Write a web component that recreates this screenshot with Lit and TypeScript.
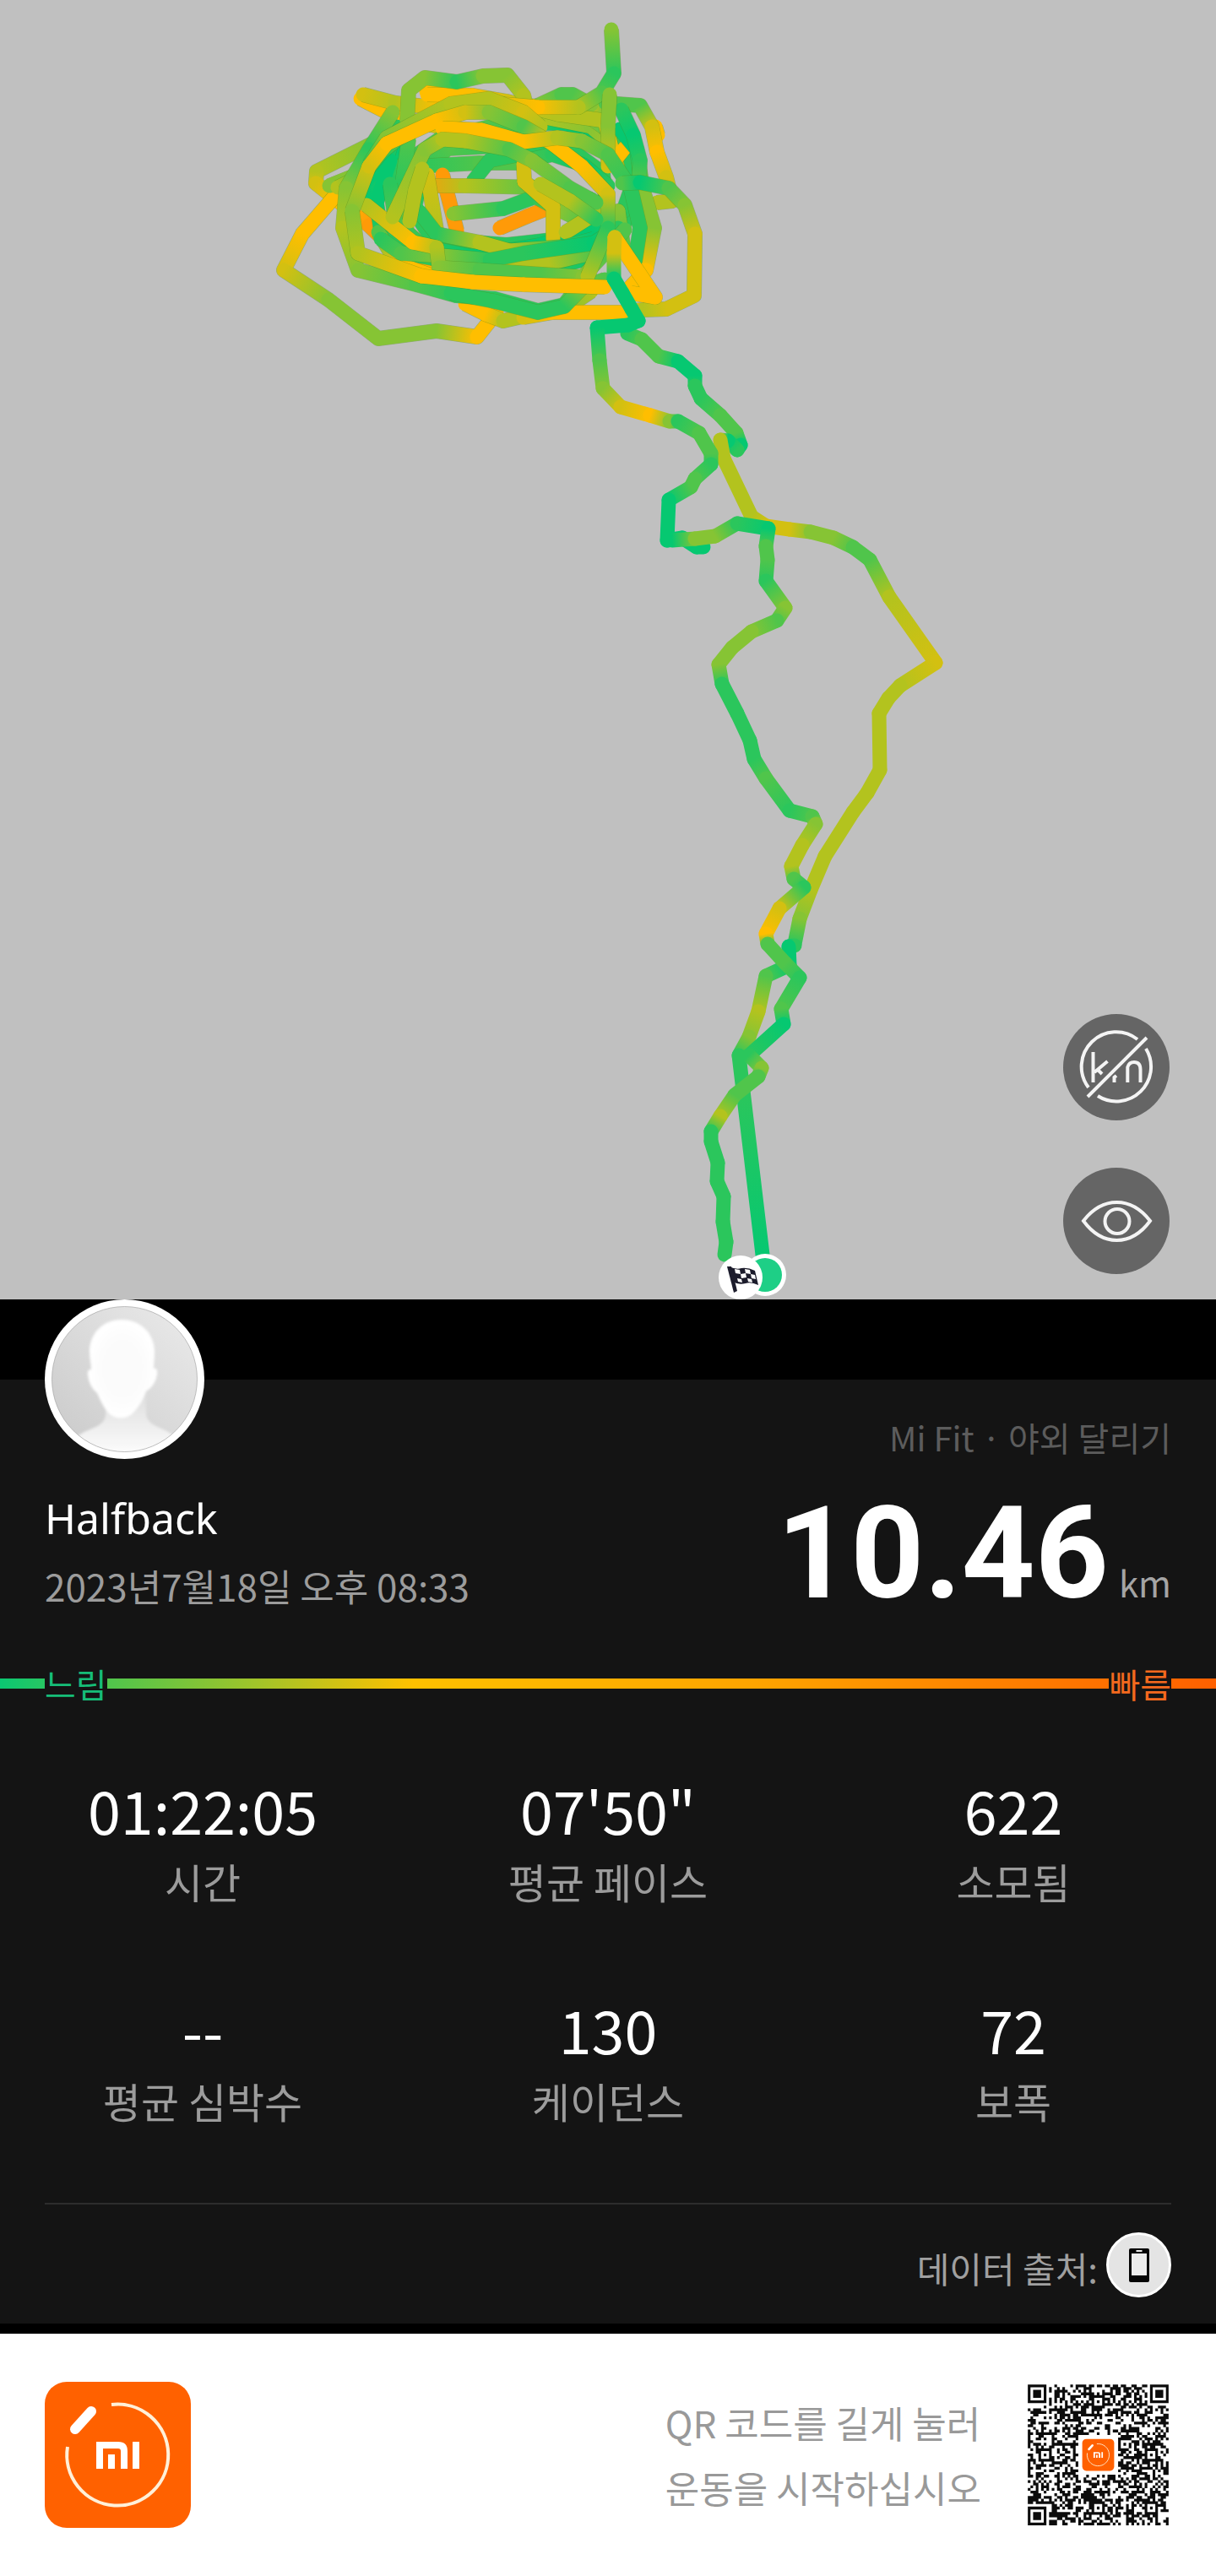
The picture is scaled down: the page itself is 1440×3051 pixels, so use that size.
import { LitElement, html, svg, css } from "lit";
import { customElement } from "lit/decorators.js";

type Point = [number, number, number];

/* Pace colours, from slow (0) to fast (7). */
const PACE = ["#06c871", "#2bc65c", "#50c54b", "#86c434", "#b3c31e", "#d3c011", "#ffbe00", "#ff9a08"];

const parse = (track: string): Point[] =>
  track.split(" ").map((p) => p.split(",").map(Number) as Point);

/* Laps round the field: x, y, pace step. Later ones lie on top. */
const LAPS = [
  "441,170,3 375,203,4 374,217,5 403,240,6 437,267,7 482,310,7 520,325,6",
  "396,233,6 358,277,6 336,320,5 389,355,3 448,401,3 517,392,3 565,399,6 588,370,6",
  "427,117,6 468,138,6 520,150,5 600,160,3 700,170,1 740,190,0",
  "430,112,5 468,122,4 520,128,6 600,126,6 689,125,6 713,126,3",
  "505,108,6 550,114,6 590,122,5",
  "776,150,6 779,160,6",
  "637,125,3 665,112,2 678,112,2 700,124,3",
  "390,220,3 420,208,3 452,200,1 470,180,0",
  "470,150,1 452,205,0 440,232,0 470,200,1 520,165,2 580,150,2 640,146,1 668,146,0 706,157,0 734,175,1 748,215,0 742,260,1 720,300,0 650,318,1 560,315,1 480,300,1 452,280,1 446,240,0 462,190,0",
  "484,165,2 476,220,1 482,275,3 510,300,2 590,306,1 680,296,0 720,262,1 714,205,1 680,180,1 610,172,1 530,176,2 500,205,1 490,250,1 512,283,1 600,290,1 690,280,0 704,250,2",
  "400,222,4 430,207,2 452,180,1 488,150,3 560,130,4 640,138,4 700,150,3 735,180,4 748,210,5 756,240,2",
  "462,218,1 468,262,2 500,292,1 560,304,0 640,290,0 700,272,0 738,250,1 752,210,1 742,170,1 700,140,3",
  "448,275,2 470,312,6 520,330,6 600,318,4 650,312,4 700,300,2",
  "506,112,6 560,113,6 600,120,5 660,135,4 716,143,4 728,190,6 740,175,6",
  "717,122,2 758,125,2 772,150,5 778,180,6 789,210,5 796,238,4 778,240,4",
  "734,153,0 754,177,0 761,223,3 775,270,3 765,320,6 742,345,6",
  "736,130,1 750,160,0 758,190,1 757,210,2",
  "496,197,1 568,193,2 613,193,2 654,183,1 690,195,0 720,220,1",
  "560,215,1 580,190,1 620,182,1",
  "524,207,7 541,273,7",
  "493,220,7 551,220,4 641,222,2 700,236,1",
  "506,207,5 517,273,4",
  "592,270,7 625,256,7 658,243,7",
  "537,253,3 596,247,1 634,233,1 665,250,3 690,262,2",
  "655,283,5 655,245,5 621,215,5 620,195,5",
  "670,275,4 700,256,4 732,250,3 738,290,2",
  "496,250,1 517,277,1 568,287,4 603,297,4 670,292,1 703,283,0",
  "451,283,1 475,300,2 524,303,3 580,308,1 620,300,1 703,288,0 732,270,1",
  "434,243,4 489,287,6 517,293,4 520,317,3 568,320,2 641,325,2 690,328,3 716,300,2 740,272,2",
  "551,360,6 575,372,6 596,380,4 640,370,4 675,362,3 700,345,4",
  "620,376,5 654,370,6 737,370,6 761,367,5",
  "465,133,3 437,177,1 410,223,3 406,270,4 424,320,3 493,337,2 540,350,1 586,354,1 637,368,1 668,361,1 682,343,3 716,331,2",
  "534,347,1 586,357,1 637,370,1 668,363,1 690,340,3",
  "482,143,3 484,107,3 503,92,3 541,97,1 572,90,3 601,89,3 620,113,4 630,150,4",
  "724,35,3 727,87,1 713,110,2 685,127,4 637,127,6 580,122,5",
  "722,112,3 720,150,3 720,197,5",
  "437,195,1 458,163,3 534,123,4 579,117,4 620,133,5 640,150,4",
  "417,250,3 437,197,5 458,170,6 517,143,6 551,133,5 579,133,3 620,150,2 654,170,6 689,197,6 720,230,5 720,270,1 696,327,4",
  "524,152,6 570,154,6 620,168,6 660,163,4 689,167,3 720,183,2 747,223,1 758,270,1 752,310,1",
  "465,257,4 503,177,3 524,165,4 551,167,4 603,177,2 630,190,3 675,223,2 706,240,2",
  "485,262,4 492,225,4 500,200,4",
  "640,218,4 675,238,4 706,260,1",
  "417,250,3 424,300,4 499,327,6 560,334,6 620,337,6 716,340,6",
  "737,217,2 758,216,0 792,223,2 811,243,3 823,277,5 822,350,5 789,366,5 761,367,4",
  "728,281,6 776,352,6 747,347,6",
];

/* The way out to the field and the way back. */
const ROUTES = [
  "743,395,1 760,402,2 780,422,2 803,428,0 823,445,0 823,457,1 830,472,1 853,492,2 872,513,2 877,527,0 873,533,1 862,522,0 853,521,4 857,543,4 890,612,4 907,623,5 935,627,5 960,630,3 987,637,3 1010,648,2 1030,663,2 1053,707,4 1108,785,5 1066,812,4 1052,827,4 1041,845,4 1042,912,4 1027,939,4 1010,962,4 977,1014,4 960,1054,4 947,1088,3 941,1118,1",
  "941,1120,1 934,1121,0 935,1143,0 907,1156,2 898,1198,4 887,1228,3 875,1250,1 880,1292,1 903,1486,0",
  "728,281,5 727,300,5 727,330,0 737,347,0 748,366,0 756,380,0 744,385,0 707,388,0 710,427,2 714,460,3 735,482,5 770,492,6 793,499,3 803,499,1 828,513,2 842,537,2 842,550,1 823,567,2 818,577,2 792,592,0 790,640,0 808,637,0 825,648,0 833,648,0",
  "796,640,0 823,638,3 847,635,3 873,620,1 910,626,0 907,647,2 909,663,2 907,688,1 930,720,3 920,735,2 890,748,3 867,767,3 851,787,3 855,810,1 873,845,1 888,877,1 893,899,1 907,922,2 935,960,1 962,967,2 966,976,3 950,1001,4 937,1026,4 940,1041,2 952,1051,1 923,1076,5 907,1106,6 909,1118,2 930,1141,2 947,1158,1 925,1195,2 928,1213,0 887,1250,1 902,1265,3 898,1275,2 870,1297,2 853,1322,4 842,1340,1 842,1352,1 850,1377,1 849,1399,1 857,1417,1 856,1447,1 860,1471,1 858,1486,1",
];

@customElement("route-map")
export class RouteMap extends LitElement {
  static styles = css`
    :host {
      display: block;
    }
    .map {
      display: block;
      width: 100%;
      height: auto;
      background: #c0c0c0;
    }
  `;

  private track(points: Point[], key: string, edge: boolean) {
    const outline = points.map((p) => `${p[0]},${p[1]}`).join(" ");
    return svg`
      ${edge
        ? svg`<polyline points=${outline} fill="none" stroke="#4d8a1c" stroke-opacity="0.45" stroke-width="18" stroke-linejoin="round" />`
        : ""}
      ${points.slice(1).map((b, i) => {
        const a = points[i];
        const id = `${key}-${i}`;
        return svg`
          <linearGradient id=${id} gradientUnits="userSpaceOnUse" x1=${a[0]} y1=${a[1]} x2=${b[0]} y2=${b[1]}>
            <stop offset="0" stop-color=${PACE[a[2]]} />
            <stop offset="1" stop-color=${PACE[b[2]]} />
          </linearGradient>
          <path d=${`M${a[0]} ${a[1]}L${b[0]} ${b[1]}`} stroke=${`url(#${id})`} stroke-width="17" stroke-linecap="round" />`;
      })}`;
  }

  render() {
    return html`
      <svg class="map" viewBox="0 0 1440 1539" role="img" aria-label="Route">
        ${LAPS.map((t, i) => this.track(parse(t), `lap${i}`, true))}
        ${ROUTES.map((t, i) => this.track(parse(t), `route${i}`, false))}
        <circle cx="906" cy="1510" r="25" fill="#fff" />
        <circle cx="906" cy="1510" r="20" fill="#1ecf86" />
        <circle cx="877" cy="1513" r="26" fill="#fff" />
        <path d="M861 1500l5 0l7 29l-4 2z" fill="#1c1c2c" />
        <path d="M863 1500q9 4 15 2q8-1 16 3l4 17q-9-4-15-2q-9 2-15-2z" fill="#1c1c2c" />
        <path
          d="M870 1503l6 1l1 5l-6-1zM882 1503l6 1l1 5l-6-1zM877 1509l6-1l1 5l-6 1zM889 1509l5 1l1 5l-5-1zM873 1514l5 1l1 4l-5-1zM885 1514l5 1l1 4l-5-1z"
          fill="#fff"
        />
      </svg>
    `;
  }
}

const mark = svg`
  <path d="M79 27A60 60 0 1 1 27 77" fill="none" stroke="#fff0d8" stroke-width="4" />
  <path d="M55 35L36 56" stroke="#fff" stroke-width="12" stroke-linecap="round" />
  <path d="M65 103V75H87Q94 75 94 82V103" fill="none" stroke="#fff" stroke-width="8" />
  <path d="M79 86V103M108 71V103" stroke="#fff" stroke-width="8" />
`;

@customElement("qr-code")
export class QrCode extends LitElement {
  static styles = css`
    :host {
      display: block;
    }
    .code {
      display: block;
      width: 100%;
      height: auto;
    }
  `;

  private modules(): string {
    const size = 53;
    let seed = 20230718;
    const random = () => {
      seed = (Math.imul(seed, 1664525) + 1013904223) >>> 0;
      return seed / 4294967296;
    };
    const grid = Array.from({ length: size }, () =>
      Array.from({ length: size }, () => random() < 0.5),
    );
    for (let i = 8; i < size - 8; i++) {
      grid[6][i] = i % 2 === 0;
      grid[i][6] = i % 2 === 0;
    }
    const square = (cx: number, cy: number, reach: number, dark: (d: number) => boolean) => {
      for (let y = cy - reach; y <= cy + reach; y++)
        for (let x = cx - reach; x <= cx + reach; x++)
          if (x >= 0 && y >= 0 && x < size && y < size)
            grid[y][x] = dark(Math.max(Math.abs(x - cx), Math.abs(y - cy)));
    };
    for (const [x, y] of [[3, 3], [49, 3], [3, 49]]) square(x, y, 4, (d) => d < 2 || d === 3);
    for (const [x, y] of [[26, 6], [6, 26], [46, 26], [26, 46], [46, 46]])
      square(x, y, 2, (d) => d !== 1);
    square(26, 26, 7, () => false);
    let path = "";
    grid.forEach((row, y) => {
      for (let x = 0; x < size; x++) {
        if (!row[x]) continue;
        let end = x;
        while (end < size && row[end]) end++;
        path += `M${x} ${y}H${end}V${y + 1.05}H${x}Z`;
        x = end;
      }
    });
    return path;
  }

  render() {
    return html`
      <svg class="code" viewBox="-1 -1 55 55" role="img" aria-label="QR">
        <path d=${this.modules()} fill="#0c0c0c" />
        <g transform="translate(20.500 20.500) scale(0.0694)">
          <rect width="173" height="173" rx="22" fill="#ff6100" />
          ${mark}
        </g>
      </svg>
    `;
  }
}

const STATS = [
  ["시간", "01:22:05"],
  ["평균 페이스", "07'50\""],
  ["소모됨", "622"],
  ["평균 심박수", "--"],
  ["케이던스", "130"],
  ["보폭", "72"],
];

@customElement("app-root")
export class AppRoot extends LitElement {
  static styles = css`
    :host {
      display: block;
      background: #fff;
      font-family: "Noto Sans CJK KR", "Noto Sans", sans-serif;
    }
    .stage {
      position: relative;
    }
    .tools {
      position: absolute;
      right: 55px;
      bottom: 30px;
      display: flex;
      flex-direction: column;
      gap: 56px;
    }
    .tool {
      width: 126px;
      height: 126px;
      padding: 0;
      border: 0;
      border-radius: 50%;
      background: #656565;
      cursor: pointer;
    }
    .tool svg {
      display: block;
      fill: none;
      stroke: #f4f4f4;
      stroke-width: 4;
    }
    .panel {
      background: linear-gradient(#000 0 95px, #141414 95px);
      border-bottom: 12px solid #000;
    }
    .summary {
      display: flex;
      justify-content: space-between;
      align-items: flex-end;
      padding: 0 53px;
    }
    .avatar {
      display: block;
      width: 189px;
      height: 189px;
      margin-bottom: 40px;
    }
    .name {
      margin: 0 0 20px;
      font: 400 50px/60px "Noto Sans", sans-serif;
      color: #fff;
    }
    .date {
      margin: 0;
      font-size: 44px;
      line-height: 60px;
      color: #9c9c9c;
    }
    .result {
      display: flex;
      flex-direction: column;
      align-items: flex-end;
      gap: 48px;
      padding-bottom: 4px;
    }
    .sport {
      margin: 0;
      font-size: 40px;
      line-height: 60px;
      color: #5c5c5c;
    }
    .distance {
      display: flex;
      align-items: baseline;
      gap: 12px;
      margin: 0;
      line-height: 120px;
    }
    .amount {
      font-family: "Roboto", sans-serif;
      font-weight: 700;
      font-size: 152px;
      color: #fff;
    }
    .unit {
      font-size: 42px;
      line-height: 60px;
      color: #a4a4a4;
    }
    .scale {
      display: flex;
      justify-content: space-between;
      align-items: center;
      margin-top: 56px;
      padding: 0 53px;
      background: linear-gradient(
          90deg,
          #0bc772,
          #50c54c 9%,
          #a0c42a 21%,
          #ffc000 34%,
          #ffa400 62%,
          #ff6000
        )
        center / 100% 12px no-repeat;
      font-size: 40px;
      line-height: 60px;
    }
    .slow,
    .fast {
      background: #141414;
    }
    .slow {
      color: #16bd78;
    }
    .fast {
      color: #f4691e;
    }
    .stats {
      display: grid;
      grid-template-columns: repeat(3, 1fr);
      row-gap: 100px;
      margin: 74px 0 0;
    }
    .stat {
      display: flex;
      flex-direction: column-reverse;
      align-items: center;
      gap: 10px;
    }
    .label {
      font-size: 49px;
      line-height: 60px;
      color: #9c9c9c;
    }
    .value {
      margin: 0;
      font-size: 70px;
      line-height: 90px;
      color: #fff;
    }
    .source {
      display: flex;
      justify-content: flex-end;
      align-items: flex-end;
      gap: 10px;
      margin: 91px 53px 0;
      padding: 33px 0 31px;
      border-top: 2px solid #2d2d2d;
      font-size: 42px;
      line-height: 70px;
      color: #a0a0a0;
    }
    .device {
      display: block;
      width: 77px;
      height: 77px;
    }
    .footer {
      display: flex;
      align-items: center;
      gap: 52px;
      padding: 57px 53px;
    }
    .logo {
      display: block;
      width: 173px;
      height: 173px;
    }
    .hint {
      margin: 0 0 0 auto;
      font-size: 44px;
      line-height: 77px;
      color: #999;
    }
    .qr {
      width: 173px;
    }
  `;

  render() {
    return html`
      <main>
        <section class="stage">
          <route-map></route-map>
          <div class="tools">
            <button class="tool" type="button" aria-label="km">
              <svg viewBox="0 0 126 126">
                <path d="M30 87A41 41 0 0 1 88 30M98 41A41 41 0 0 1 41 97M99 28L29 98" />
                <path d="M35.500 45V81M52.500 56L37 69M41 66L46 71M60.500 81V75L63 73" />
                <path d="M76.300 81V63Q78 57 84 57Q91.500 57 91.500 66V81" />
              </svg>
            </button>
            <button class="tool" type="button" aria-label="view">
              <svg viewBox="0 0 126 126">
                <path d="M24 63Q41 41 63.500 41Q86 41 103 63Q86 86 63.500 86Q41 86 24 63Z" />
                <circle cx="64" cy="63.500" r="14.500" />
              </svg>
            </button>
          </div>
        </section>

        <section class="panel">
          <header class="summary">
            <div>
              <svg class="avatar" viewBox="0 0 189 189" aria-hidden="true">
                <defs>
                  <linearGradient id="backdrop" x1="0" y1="1" x2="1" y2="0">
                    <stop offset="0" stop-color="#c9c9c9" />
                    <stop offset="1" stop-color="#ebebeb" />
                  </linearGradient>
                  <linearGradient id="body" x1="0" y1="0" x2="0" y2="1">
                    <stop offset="0" stop-color="#dcdcdc" />
                    <stop offset="1" stop-color="#fff" />
                  </linearGradient>
                  <radialGradient id="face">
                    <stop offset="0.500" stop-color="#fbfbfb" />
                    <stop offset="1" stop-color="#fff" />
                  </radialGradient>
                  <filter id="soft"><feGaussianBlur stdDeviation="1.500" /></filter>
                  <clipPath id="disc"><circle cx="94.500" cy="94.500" r="86" /></clipPath>
                </defs>
                <circle cx="94.500" cy="94.500" r="94.500" fill="#fff" />
                <circle cx="94.500" cy="94.500" r="86" fill="url(#backdrop)" />
                <g clip-path="url(#disc)" filter="url(#soft)">
                  <path
                    d="M72 110V138Q70 148 56 153Q36 160 28 174V190H164V174Q156 160 136 152Q121 146 120 136V108Z"
                    fill="url(#body)"
                  />
                  <path
                    d="M91 24C68 24 53 41 53 62C53 70 55 76 55 83Q50 82 51 90Q53 104 62 111C66 120 70 129 77 136Q90 145 103 136C111 128 116 120 120 109Q131 102 133 89Q134 80 129 82C129 76 130 70 130 62C130 41 114 24 91 24Z"
                    fill="url(#face)"
                  />
                </g>
                <circle cx="94.500" cy="94.500" r="86" fill="none" stroke="#9a9a9a" stroke-width="0.600" />
              </svg>
              <h1 class="name">Halfback</h1>
              <p class="date">2023년7월18일 오후 08:33</p>
            </div>
            <div class="result">
              <p class="sport">Mi Fit · 야외 달리기</p>
              <p class="distance">
                <span class="amount">10.46</span><span class="unit">km</span>
              </p>
            </div>
          </header>

          <div class="scale">
            <span class="slow">느림</span>
            <span class="fast">빠름</span>
          </div>

          <dl class="stats">
            ${STATS.map(
              ([label, value]) => html`
                <div class="stat">
                  <dt class="label">${label}</dt>
                  <dd class="value">${value}</dd>
                </div>
              `,
            )}
          </dl>

          <div class="source">
            <span>데이터 출처:</span>
            <svg class="device" viewBox="0 0 77 77" aria-hidden="true">
              <circle cx="38.500" cy="38.500" r="37" fill="#e4e4e4" stroke="#fff" stroke-width="3" />
              <rect x="27" y="19" width="24" height="40" rx="2" fill="#050505" />
              <rect x="30" y="25" width="18" height="26" fill="#ececec" />
              <rect x="35.500" y="21" width="7" height="2" fill="#ececec" />
            </svg>
          </div>
        </section>

        <footer class="footer">
          <svg class="logo" viewBox="0 0 173 173" role="img" aria-label="Mi Fit">
            <rect width="173" height="173" rx="26" fill="#ff6100" />
            ${mark}
          </svg>
          <p class="hint">QR 코드를 길게 눌러<br />운동을 시작하십시오</p>
          <qr-code class="qr"></qr-code>
        </footer>
      </main>
    `;
  }
}
